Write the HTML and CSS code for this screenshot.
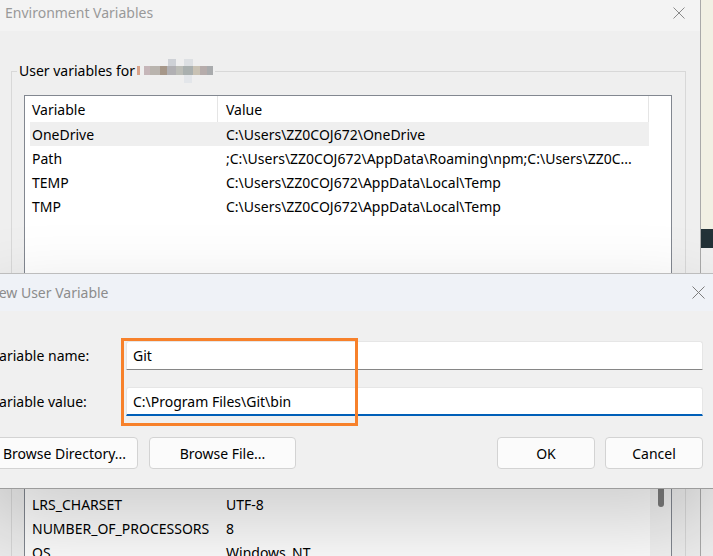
FILE: index.html
```html
<!DOCTYPE html>
<html lang="en">

<head>
    <meta charset="utf-8">
    <meta name="viewport" content="width=device-width, initial-scale=1.0">
    <title>Environment Variables</title>
    <link rel="stylesheet" href="styles.css">
</head>

<body>
    <div class="envwin">
        <div class="titlebar">
            <span class="wtitle">Environment Variables</span>
            <svg class="luk" width="12" height="12" viewBox="0 0 12 12">
                <path d="M0.5 0.5L11.5 11.5M11.5 0.5L0.5 11.5" stroke="#8a8a8a" stroke-width="1" />
            </svg>
        </div>

        <fieldset class="gruppe">
            <legend>User variables for <svg class="sloret" width="76" height="26" viewBox="0 0 76 26">
                    <rect x="0" y="7" width="3" height="9" fill="#d8a38a" />
                    <rect x="7" y="7" width="6" height="9" fill="#c6b6b9" />
                    <rect x="13" y="7" width="10" height="9" fill="#b9b4ae" />
                    <rect x="23" y="7" width="7" height="9" fill="#a69789" />
                    <rect x="30" y="7" width="9" height="9" fill="#b1b0b3" />
                    <rect x="31" y="0" width="8" height="7" fill="#ced1d6" />
                    <rect x="39" y="7" width="7" height="9" fill="#bcbdb7" />
                    <rect x="46" y="7" width="10" height="9" fill="#aab0af" />
                    <rect x="47" y="0" width="9" height="7" fill="#dde0e3" />
                    <rect x="47" y="16" width="8" height="8" fill="#e3e6ea" />
                    <rect x="56" y="7" width="7" height="9" fill="#c9c2b4" />
                    <rect x="63" y="7" width="7" height="9" fill="#b6acab" />
                    <rect x="70" y="7" width="6" height="9" fill="#a9abad" />
                </svg></legend>
            <div class="liste">
                <div class="raekker">
                    <div class="raekke hoved"><span>Variable</span><span>Value</span></div>
                    <div class="raekke valgt"><span>OneDrive</span><span>C:\Users\ZZ0COJ672\OneDrive</span></div>
                    <div class="raekke"><span>Path</span><span>;C:\Users\ZZ0COJ672\AppData\Roaming\npm;C:\Users\ZZ0C...</span></div>
                    <div class="raekke"><span>TEMP</span><span>C:\Users\ZZ0COJ672\AppData\Local\Temp</span></div>
                    <div class="raekke"><span>TMP</span><span>C:\Users\ZZ0COJ672\AppData\Local\Temp</span></div>
                </div>
            </div>
        </fieldset>

        <fieldset class="gruppe system">
            <legend>System variables</legend>
            <div class="liste lav">
                <div class="raekker">
                    <div class="raekke hoved"><span>Variable</span><span>Value</span></div>
                    <div class="raekke"><span>ComSpec</span><span>C:\Windows\system32\cmd.exe</span></div>
                    <div class="raekke"><span>ComputerName</span><span>LT-ZZ0COJ672</span></div>
                    <div class="raekke"><span>DriverData</span><span>C:\Windows\DriverData</span></div>
                    <div class="raekke"><span>LRS_CHARSET</span><span>UTF-8</span></div>
                    <div class="raekke"><span>NUMBER_OF_PROCESSORS</span><span>8</span></div>
                    <div class="raekke"><span>OS</span><span>Windows_NT</span></div>
                </div>
                <div class="rullebar"><div class="greb"></div></div>
            </div>
        </fieldset>
    </div>

    <div class="dialog">
        <div class="dtitel">
            <span>New User Variable</span>
            <svg class="luk" width="13" height="13" viewBox="0 0 13 13">
                <path d="M0.5 0.5L12.5 12.5M12.5 0.5L0.5 12.5" stroke="#7c7c7c" stroke-width="1" />
            </svg>
        </div>
        <div class="dindhold">
            <div class="felt">
                <label for="navn">Variable name:</label>
                <input id="navn" class="tekstfelt" type="text" value="Git" readonly>
            </div>
            <div class="felt">
                <label for="vaerdi">Variable value:</label>
                <input id="vaerdi" class="tekstfelt aktiv" type="text" value="C:\Program Files\Git\bin" readonly>
            </div>
            <div class="knapper">
                <button class="knap bred">Browse Directory...</button>
                <button class="knap bred">Browse File...</button>
                <span class="fyld"></span>
                <button class="knap">OK</button>
                <button class="knap">Cancel</button>
            </div>
        </div>
        <div class="markering"></div>
    </div>
</body>

</html>
```

FILE: styles.css
```css
html,
body {
    margin: 0;
    height: 100%;
    overflow: hidden;
}

body {
    font-family: "Noto Sans", "Open Sans", sans-serif;
    font-size: 14px;
    color: #000;
    /* skrivebordet til hoejre for vinduet */
    background: linear-gradient(to bottom, #f1f0e4 0 229px, #233238 229px 248px, #f0f0f0 248px);
}

.envwin {
    width: 700px;
    height: 556px;
    border-right: 1px solid #a9a9a9;
    background-color: #efefef;
    overflow: hidden;
}

.titlebar {
    height: 25px;
    background-color: #f3f3f3;
    display: flex;
    align-items: center;
    justify-content: space-between;
    padding: 0 15px 6px 5px;
}

.wtitle {
    color: #999;
}

.gruppe {
    margin: 30px 14px 0 11px;
    padding: 14px 13px 12px 12px;
    border: 1px solid #d8d8d8;
    min-width: 0;
}

.gruppe legend {
    margin-left: -7px;
    padding: 0 2px;
    height: 20px;
    line-height: 22px;
    display: flex;
    align-items: center;
}

.sloret {
    margin-left: 2px;
    margin-top: 1px;
}

.system {
    margin-top: 19px;
}

.liste {
    height: 230px;
    border: 1px solid #828790;
    background-color: #fff;
    display: flex;
    padding-left: 5px;
}

.lav {
    height: 200px;
}

.raekker {
    width: 619px;
}

.raekke {
    display: grid;
    grid-template-columns: 188px 1fr;
    height: 24px;
    line-height: 23px;
    white-space: nowrap;
}

.raekke span {
    padding-top: 1px;
}

.raekke span:first-child {
    padding-left: 2px;
}

.raekke span:last-child {
    padding-left: 8px;
    overflow: hidden;
}

.hoved {
    height: 26px;
    line-height: 25px;
}

.hoved span {
    border-right: 1px solid #e5e5e5;
}

.valgt {
    background-color: #efefef;
}

.rullebar {
    width: 21px;
    margin-left: 1px;
    background-color: #f4f4f4;
}

.greb {
    width: 6px;
    height: 73px;
    margin: 40px auto 0;
    background-color: #7c7c7c;
    border-radius: 3px;
}

/* dialogen ligger oven paa vinduet */
.dialog {
    position: absolute;
    left: -21px;
    top: 273px;
    width: 737px;
    border-top: 1px solid #bdbdbd;
    border-bottom: 1px solid #9c9c9c;
    background-color: #f0f0f0;
    box-shadow: 0 37px 88px rgba(0, 0, 0, 0.2);
}

.dtitel {
    height: 37px;
    background-color: #eff2f7;
    color: #8c8c8c;
    display: flex;
    align-items: center;
    justify-content: space-between;
    padding: 0 11px 0 9px;
}

.dindhold {
    padding: 30px 13px 19px 12px;
}

.felt {
    display: flex;
    align-items: center;
    margin-bottom: 17px;
}

.felt label {
    width: 135px;
    flex: none;
}

.tekstfelt {
    flex: 1;
    height: 29px;
    box-sizing: border-box;
    border: 1px solid #e6e6e6;
    border-bottom-color: #868686;
    border-radius: 3px 3px 0 0;
    padding: 0 6px;
    font: inherit;
    color: #000;
    background-color: #fff;
    outline: none;
}

.aktiv {
    border-bottom: 2px solid #005fb8;
    padding-top: 1px;
}

.knapper {
    display: flex;
    gap: 10px;
    margin-top: 21px;
}

.fyld {
    flex: 1;
}

.knap {
    width: 98px;
    height: 32px;
    border: 1px solid #d3d3d3;
    border-radius: 4px;
    background-color: #fbfbfb;
    font: inherit;
    color: #000;
    padding: 0;
}

.bred {
    width: 147px;
}

.bred + .bred {
    margin-left: 1px;
}

.markering {
    position: absolute;
    left: 142px;
    top: 64px;
    width: 237px;
    height: 88px;
    box-sizing: border-box;
    border: 3px solid #f7812b;
}
```
